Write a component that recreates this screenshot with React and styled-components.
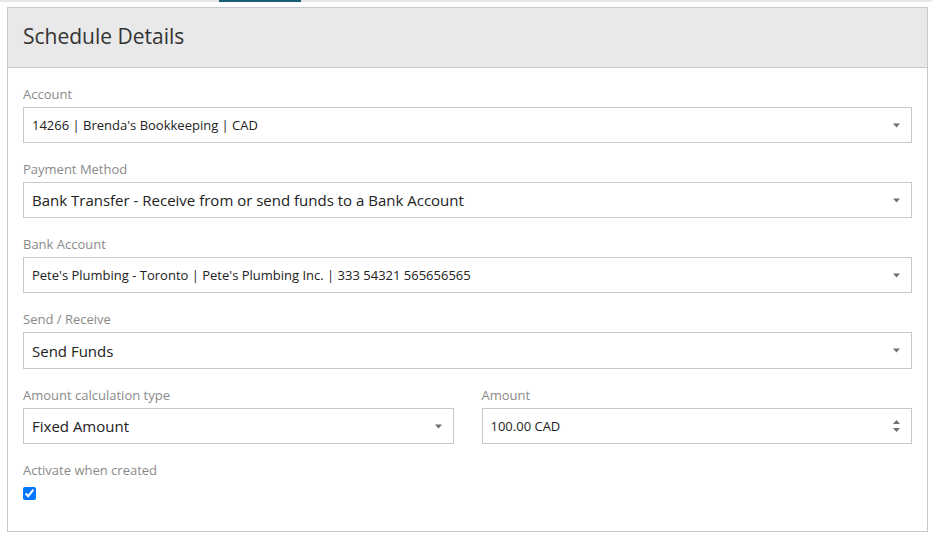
import styled, { createGlobalStyle } from "styled-components";

const GlobalStyle = createGlobalStyle`
  html, body {
    margin: 0;
    padding: 0;
    background: #fff;
    font-family: "Open Sans", "Noto Sans", Arial, sans-serif;
  }
`;

const TopStrip = styled.div`
  height: 2px;
  background: #e8e8e8;
  display: flex;

  .active-tab {
    margin-left: 219px;
    width: 82px;
    background: #1b5c74;
  }
`;

const Panel = styled.section`
  margin: 5px 4px 0 7px;
  border: 1px solid #c8c8c8;
  background: #fff;
`;

const PanelHeader = styled.header`
  height: 59px;
  display: flex;
  align-items: center;
  padding: 0 15px;
  background: #e9e9e9;
  border-bottom: 1px solid #c8c8c8;

  h2 {
    margin: 0 0 3px;
    font-size: 21px;
    font-weight: 400;
    color: #333;
  }
`;

const PanelBody = styled.div`
  padding: 17px 15px 31px;
`;

const Field = styled.div`
  margin-bottom: ${(p) => (p.$last ? 0 : 17)}px;
`;

const Row = styled.div`
  display: grid;
  grid-template-columns: 1fr 1fr;
  column-gap: 28px;
`;

const Label = styled.div`
  font-size: 13px;
  line-height: 18px;
  color: #8a8a8a;
  margin-bottom: 4px;
`;

const SelectBox = styled.div`
  height: ${(p) => p.$h || 36}px;
  box-sizing: border-box;
  border: 1px solid #c8c8c8;
  background: #fff;
  display: flex;
  align-items: center;
  padding: 0 11px 0 8px;
  color: #222;
  font-size: ${(p) => p.$size || 13}px;
`;

const Value = styled.span`
  flex: 1;
  white-space: nowrap;
`;

const Check = styled.input`
  margin: 8px 0 0 0;
  width: 13px;
  height: 13px;
  accent-color: #0075ff;
  display: block;
`;

function Caret() {
  return (
    <svg width="7" height="5" viewBox="0 0 7 5">
      <path d="M0 0.5 H7 L3.5 4.5 Z" fill="#6f6f6f" />
    </svg>
  );
}

function Spinner() {
  return (
    <svg width="7" height="14" viewBox="0 0 7 14">
      <path d="M0 5 H7 L3.5 1 Z" fill="#6f6f6f" />
      <path d="M0 9 H7 L3.5 13 Z" fill="#6f6f6f" />
    </svg>
  );
}

function Select({ label, value, size, h, last }) {
  return (
    <Field $last={last}>
      <Label>{label}</Label>
      <SelectBox $size={size} $h={h}>
        <Value>{value}</Value>
        <Caret />
      </SelectBox>
    </Field>
  );
}

export default function App() {
  return (
    <>
      <GlobalStyle />
      <TopStrip>
        <div className="active-tab" />
      </TopStrip>
      <Panel>
        <PanelHeader>
          <h2>Schedule Details</h2>
        </PanelHeader>
        <PanelBody>
          <Select label="Account" value="14266 | Brenda's Bookkeeping | CAD" />
          <Select
            label="Payment Method"
            size={15}
            value="Bank Transfer - Receive from or send funds to a Bank Account"
          />
          <Select
            label="Bank Account"
            value="Pete's Plumbing - Toronto | Pete's Plumbing Inc. | 333 54321 565656565"
          />
          <Select label="Send / Receive" size={15} h={37} value="Send Funds" />
          <Row>
            <Select label="Amount calculation type" size={15} value="Fixed Amount" />
            <Field>
              <Label>Amount</Label>
              <SelectBox>
                <Value>100.00 CAD</Value>
                <Spinner />
              </SelectBox>
            </Field>
          </Row>
          <Field $last>
            <Label>Activate when created</Label>
            <Check type="checkbox" defaultChecked />
          </Field>
        </PanelBody>
      </Panel>
    </>
  );
}
